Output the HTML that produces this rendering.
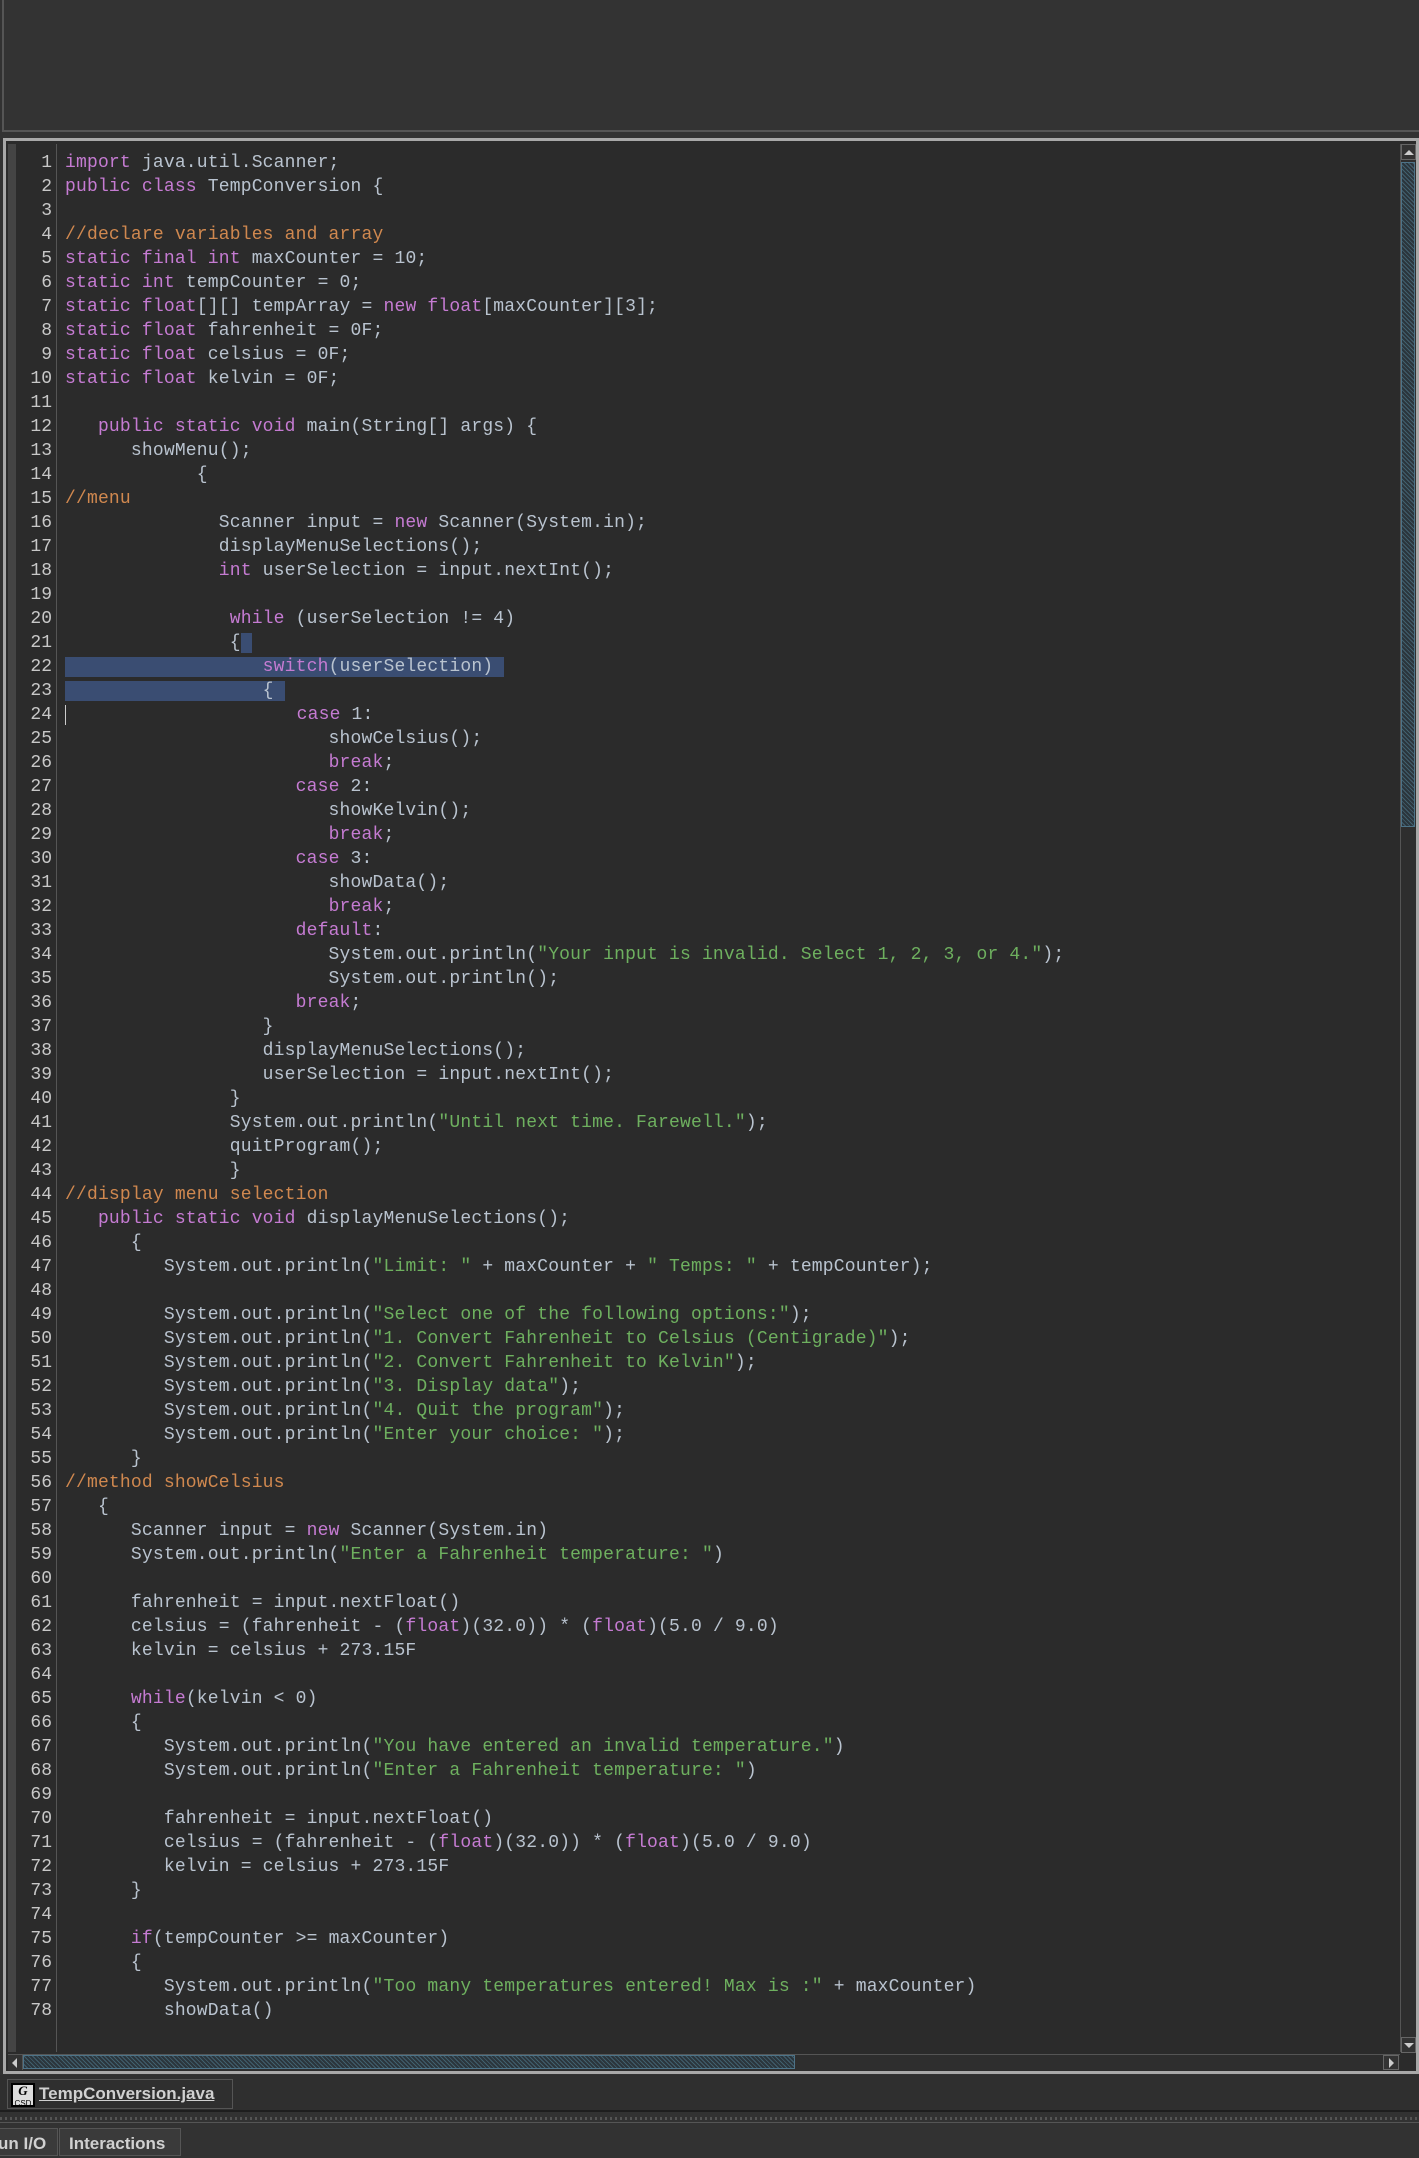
<!DOCTYPE html>
<html><head><meta charset="utf-8"><style>
*{margin:0;padding:0;box-sizing:border-box}
body{width:1419px;height:2158px;background:#323232;position:relative;overflow:hidden;font-family:"Liberation Mono",monospace}
.top{position:absolute;left:2px;top:0;width:1417px;height:132px;background:#333;border-left:2px solid #555;border-bottom:2px solid #555}
.edbox{position:absolute;left:3px;top:138px;width:1416px;height:1936px;border:3px solid #a8a8a8;background:#2b2b2b}
.strip{position:absolute;left:8px;top:144px;width:8px;height:1908px;background:#444}
.sep{position:absolute;left:56px;top:144px;width:1px;height:1908px;background:#555}
.code{position:absolute;left:0;top:151px;font-size:18px;line-height:24px;color:#b9c3cf;white-space:pre;letter-spacing:0.18px}
.ln{display:inline-block;width:52px;text-align:right;color:#c8c8c8;margin-right:13px;letter-spacing:0}
.k{color:#c57bd2}.c{color:#d0884f}.s{color:#6eb05f}
.sel{background:#3a4d72}
.vs{position:absolute;left:1400px;top:144px;width:16px;height:1908px;background:#2e2e2e;border-left:1px solid #555}
.vthumb{position:absolute;left:1401px;top:162px;width:14px;height:665px;border:1px solid #4d7388;background:repeating-linear-gradient(45deg,#2b353c 0 2px,#41606e 2px 3px)}
.hs{position:absolute;left:8px;top:2054px;width:1392px;height:16px;background:#2e2e2e;border-top:1px solid #555}
.hthumb{position:absolute;left:23px;top:2055px;width:772px;height:14px;border:1px solid #4d7388;background:repeating-linear-gradient(45deg,#2b353c 0 2px,#41606e 2px 3px)}
.tabbar{position:absolute;left:0;top:2075px;width:1419px;height:37px;background:#2f2f2f;border-bottom:2px solid #1e1e1e}
.tab{position:absolute;left:7px;top:2079px;width:226px;height:30px;border:1px solid #555;font:bold 17px "Liberation Sans",sans-serif;color:#d0d0d0}
.dots{position:absolute;left:0;top:2117px;width:1419px;height:3px;background:repeating-linear-gradient(90deg,#555 0 2px,transparent 2px 5px)}
.bl{position:absolute;left:0;top:2122px;width:1419px;height:1px;background:#555}
.bt{position:absolute;top:2128px;height:28px;border:1px solid #555;background:#3a3a3a;font:bold 17px "Liberation Sans",sans-serif;color:#d0d0d0;padding:5px 9px}
</style></head><body>
<div class="top"></div>
<div class="edbox"></div>
<div class="strip"></div>
<div class="sep"></div>
<div class="code"><span class="ln">1</span><span class="k">import</span> java.util.Scanner;
<span class="ln">2</span><span class="k">public class</span> TempConversion {
<span class="ln">3</span>
<span class="ln">4</span><span class="c">//declare variables and array</span>
<span class="ln">5</span><span class="k">static final int</span> maxCounter = 10;
<span class="ln">6</span><span class="k">static int</span> tempCounter = 0;
<span class="ln">7</span><span class="k">static float</span>[][] tempArray = <span class="k">new float</span>[maxCounter][3];
<span class="ln">8</span><span class="k">static float</span> fahrenheit = 0F;
<span class="ln">9</span><span class="k">static float</span> celsius = 0F;
<span class="ln">10</span><span class="k">static float</span> kelvin = 0F;
<span class="ln">11</span>
<span class="ln">12</span>   <span class="k">public static void</span> main(String[] args) {
<span class="ln">13</span>      showMenu();
<span class="ln">14</span>            {
<span class="ln">15</span><span class="c">//menu</span>
<span class="ln">16</span>              Scanner input = <span class="k">new</span> Scanner(System.in);
<span class="ln">17</span>              displayMenuSelections();
<span class="ln">18</span>              <span class="k">int</span> userSelection = input.nextInt();
<span class="ln">19</span>
<span class="ln">20</span>               <span class="k">while</span> (userSelection != 4)
<span class="ln">21</span>               {<span class="sel"> </span>
<span class="ln">22</span><span class="sel">                  <span class="k">switch</span>(userSelection) </span>
<span class="ln">23</span><span class="sel">                  { </span>
<span class="ln">24</span><span style="border-left:1px solid #ccc"></span>                     <span class="k">case</span> 1:
<span class="ln">25</span>                        showCelsius();
<span class="ln">26</span>                        <span class="k">break</span>;
<span class="ln">27</span>                     <span class="k">case</span> 2:
<span class="ln">28</span>                        showKelvin();
<span class="ln">29</span>                        <span class="k">break</span>;
<span class="ln">30</span>                     <span class="k">case</span> 3:
<span class="ln">31</span>                        showData();
<span class="ln">32</span>                        <span class="k">break</span>;
<span class="ln">33</span>                     <span class="k">default</span>:
<span class="ln">34</span>                        System.out.println(<span class="s">"Your input is invalid. Select 1, 2, 3, or 4."</span>);
<span class="ln">35</span>                        System.out.println();
<span class="ln">36</span>                     <span class="k">break</span>;
<span class="ln">37</span>                  }
<span class="ln">38</span>                  displayMenuSelections();
<span class="ln">39</span>                  userSelection = input.nextInt();
<span class="ln">40</span>               }
<span class="ln">41</span>               System.out.println(<span class="s">"Until next time. Farewell."</span>);
<span class="ln">42</span>               quitProgram();
<span class="ln">43</span>               }
<span class="ln">44</span><span class="c">//display menu selection</span>
<span class="ln">45</span>   <span class="k">public static void</span> displayMenuSelections();
<span class="ln">46</span>      {
<span class="ln">47</span>         System.out.println(<span class="s">"Limit: "</span> + maxCounter + <span class="s">" Temps: "</span> + tempCounter);
<span class="ln">48</span>
<span class="ln">49</span>         System.out.println(<span class="s">"Select one of the following options:"</span>);
<span class="ln">50</span>         System.out.println(<span class="s">"1. Convert Fahrenheit to Celsius (Centigrade)"</span>);
<span class="ln">51</span>         System.out.println(<span class="s">"2. Convert Fahrenheit to Kelvin"</span>);
<span class="ln">52</span>         System.out.println(<span class="s">"3. Display data"</span>);
<span class="ln">53</span>         System.out.println(<span class="s">"4. Quit the program"</span>);
<span class="ln">54</span>         System.out.println(<span class="s">"Enter your choice: "</span>);
<span class="ln">55</span>      }
<span class="ln">56</span><span class="c">//method showCelsius</span>
<span class="ln">57</span>   {
<span class="ln">58</span>      Scanner input = <span class="k">new</span> Scanner(System.in)
<span class="ln">59</span>      System.out.println(<span class="s">"Enter a Fahrenheit temperature: "</span>)
<span class="ln">60</span>
<span class="ln">61</span>      fahrenheit = input.nextFloat()
<span class="ln">62</span>      celsius = (fahrenheit - (<span class="k">float</span>)(32.0)) * (<span class="k">float</span>)(5.0 / 9.0)
<span class="ln">63</span>      kelvin = celsius + 273.15F
<span class="ln">64</span>
<span class="ln">65</span>      <span class="k">while</span>(kelvin &lt; 0)
<span class="ln">66</span>      {
<span class="ln">67</span>         System.out.println(<span class="s">"You have entered an invalid temperature."</span>)
<span class="ln">68</span>         System.out.println(<span class="s">"Enter a Fahrenheit temperature: "</span>)
<span class="ln">69</span>
<span class="ln">70</span>         fahrenheit = input.nextFloat()
<span class="ln">71</span>         celsius = (fahrenheit - (<span class="k">float</span>)(32.0)) * (<span class="k">float</span>)(5.0 / 9.0)
<span class="ln">72</span>         kelvin = celsius + 273.15F
<span class="ln">73</span>      }
<span class="ln">74</span>
<span class="ln">75</span>      <span class="k">if</span>(tempCounter &gt;= maxCounter)
<span class="ln">76</span>      {
<span class="ln">77</span>         System.out.println(<span class="s">"Too many temperatures entered! Max is :"</span> + maxCounter)
<span class="ln">78</span>         showData()</div>
<div class="vs"></div>
<div style="position:absolute;left:1401px;top:144px;width:15px;height:16px;border:1px solid #666;background:#333"><div style="margin:5px auto 0;width:0;height:0;border-left:5px solid transparent;border-right:5px solid transparent;border-bottom:5px solid #ccc"></div></div>
<div class="vthumb"></div>
<div style="position:absolute;left:1401px;top:2037px;width:15px;height:16px;border:1px solid #666;background:#333"><div style="margin:5px auto 0;width:0;height:0;border-left:5px solid transparent;border-right:5px solid transparent;border-top:5px solid #ccc"></div></div>
<div class="hs"></div>
<div style="position:absolute;left:8px;top:2055px;width:15px;height:15px;background:#333;border-right:1px solid #555"><div style="margin:3px 0 0 4px;width:0;height:0;border-top:5px solid transparent;border-bottom:5px solid transparent;border-right:5px solid #ccc"></div></div>
<div class="hthumb"></div>
<div style="position:absolute;left:1383px;top:2055px;width:16px;height:15px;background:#333;border:1px solid #666"><div style="margin:2px 0 0 5px;width:0;height:0;border-top:5px solid transparent;border-bottom:5px solid transparent;border-left:5px solid #ccc"></div></div>
<div class="tabbar"></div>
<div class="tab"><div style="position:absolute;left:3px;top:3px;width:24px;height:24px;background:#ddd;border:2px solid #000;font:italic bold 13px 'Liberation Serif',serif;color:#000;text-align:center;line-height:11px">G<br><span style="font:8px 'Liberation Sans',sans-serif;font-style:normal">CSD</span></div><span style="position:absolute;left:31px;top:4px;text-decoration:underline">TempConversion.java</span></div>
<div class="dots"></div>
<div class="bl"></div>
<div class="bt" style="left:-12px;width:70px">un I/O</div>
<div class="bt" style="left:59px;width:122px">Interactions</div>
</body></html>
